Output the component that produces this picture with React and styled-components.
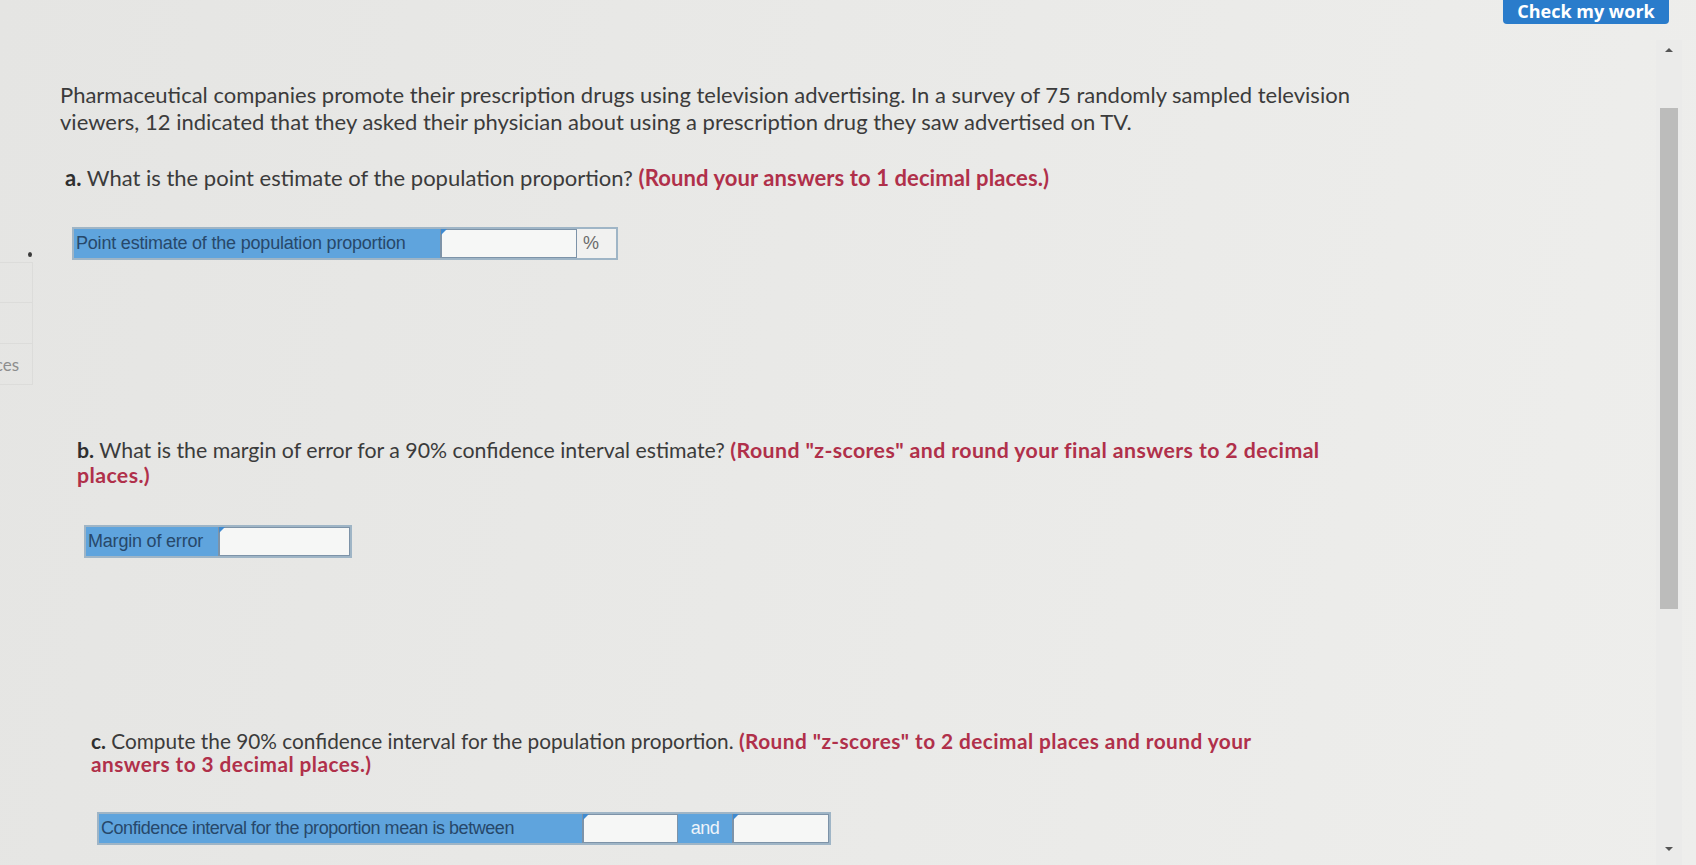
import React from 'react';
import styled, { createGlobalStyle } from 'styled-components';

const GlobalStyle = createGlobalStyle`
  html, body {
    margin: 0;
    padding: 0;
    overflow: hidden;
  }
  body {
    font-family: Lato, "Liberation Sans", sans-serif;
    background: #e8e8e6;
  }
`;

const Page = styled.div`
  display: flex;
  width: 1696px;
  height: 865px;
  overflow: hidden;
  background: linear-gradient(100deg, #e5e5e3 0%, #e9e9e7 45%, #eeeeec 100%);
`;

const Sidebar = styled.div`
  position: relative;
  width: 33px;
  flex-shrink: 0;
  display: flex;
  flex-direction: column;
  padding-top: 262px;
`;

const SideDot = styled.span`
  position: absolute;
  left: 28px;
  top: 252px;
  width: 4px;
  height: 5px;
  border-radius: 50%;
  background: #3a3a3a;
`;

const SideTab = styled.div`
  height: 41px;
  box-sizing: border-box;
  border: 1px solid #dcdcda;
  border-left: none;
  border-top: ${(p) => (p.first ? '1px solid #dcdcda' : 'none')};
  display: flex;
  align-items: center;
  justify-content: flex-end;
  padding-right: 13px;
  overflow: hidden;
  font-family: Lato, "Liberation Sans", sans-serif;
  font-size: 17px;
  color: #8d8d8d;
`;

const Main = styled.div`
  flex: 1;
  padding-top: 81px;
  color: #3b3b3b;
`;

const Paragraph = styled.p`
  margin: 0 0 0 ${(p) => p.indent}px;
  font-size: 22px;
  line-height: 27px;
  white-space: nowrap;
`;

const Question = styled.p`
  margin: ${(p) => p.top}px 0 0 ${(p) => p.indent}px;
  font-size: ${(p) => p.size || 22}px;
  line-height: ${(p) => p.lh || 27}px;
  white-space: nowrap;

  b + b,
  b:last-child {
    letter-spacing: ${(p) => p.hs || 0}px;
  }
`;

const Letter = styled.b`
  font-weight: 700;
  color: #2f2f2f;
`;

const Hint = styled.b`
  font-weight: 700;
  color: #b0304a;
`;

const AnswerRow = styled.div`
  display: flex;
  width: fit-content;
  height: 33px;
  margin: ${(p) => p.top}px 0 0 ${(p) => p.indent}px;
  border: 2px solid #9fb5c6;
  box-sizing: border-box;
  background: #5fa4dd;
  font-family: "Liberation Sans", Arial, sans-serif;
  font-size: 18px;
  letter-spacing: ${(p) => p.ls ?? -0.2}px;
  color: #27486a;
`;

const LabelCell = styled.div`
  width: ${(p) => p.w}px;
  display: flex;
  align-items: center;
  padding-left: 2px;
  box-sizing: border-box;
  white-space: nowrap;
  overflow: hidden;
`;

const InputCell = styled.div`
  position: relative;
  width: ${(p) => p.w}px;
  background: #f6f7f6;
  border: 1px solid #7d93a8;
  border-left-width: 2px;
  box-sizing: border-box;

  &::before {
    content: '';
    position: absolute;
    left: -1px;
    top: -1px;
    border-top: 6px solid #3f8ad0;
    border-right: 6px solid transparent;
  }
`;

const UnitCell = styled.div`
  width: ${(p) => p.w}px;
  display: flex;
  align-items: center;
  justify-content: ${(p) => (p.center ? 'center' : 'flex-start')};
  padding-left: ${(p) => (p.center ? 0 : 6)}px;
  box-sizing: border-box;
  background: ${(p) => (p.light ? '#f1f1f0' : 'transparent')};
  color: ${(p) => (p.light ? '#6a6a6a' : '#eef4fa')};
`;

const RightRail = styled.div`
  width: 193px;
  flex-shrink: 0;
  display: flex;
  flex-direction: column;
  align-items: flex-end;
`;

const CheckButton = styled.button`
  width: 166px;
  height: 24px;
  margin-right: 27px;
  border: none;
  border-radius: 0 0 4px 4px;
  background: #2a7ccb;
  color: #fff;
  font-family: "Open Sans", "Liberation Sans", sans-serif;
  font-weight: 700;
  font-size: 18px;
  line-height: 20px;
  padding: 0 0 3px;
  display: flex;
  align-items: flex-end;
  justify-content: center;
  box-sizing: border-box;
`;

const ScrollTrack = styled.div`
  flex: 1;
  width: 26px;
  margin: 16px 14px 0 0;
  display: flex;
  flex-direction: column;
  align-items: center;
  background: #ebebea;
`;

const Arrow = styled.div`
  width: 0;
  height: 0;
  border-left: 4px solid transparent;
  border-right: 4px solid transparent;
  ${(p) =>
    p.down
      ? 'border-top: 4px solid #555; margin: auto 0 14px;'
      : 'border-bottom: 4px solid #555; margin-top: 8px;'}
`;

const Thumb = styled.div`
  width: 18px;
  height: 501px;
  margin-top: 56px;
  background: #bcbcbb;
`;

export default function App() {
  return (
    <>
      <GlobalStyle />
      <Page>
        <Sidebar>
          <SideDot />
          <SideTab first />
          <SideTab />
          <SideTab>ces</SideTab>
        </Sidebar>
        <Main>
          <Paragraph indent={27}>
            Pharmaceutical companies promote their prescription drugs using television advertising. In a survey of 75 randomly sampled television
            <br />
            viewers, 12 indicated that they asked their physician about using a prescription drug they saw advertised on TV.
          </Paragraph>

          <Question top={29} indent={32} hs={0.1}>
            <Letter>a.</Letter> What is the point estimate of the population proportion?{' '}
            <Hint>(Round your answers to 1 decimal places.)</Hint>
          </Question>
          <AnswerRow top={36} indent={39}>
            <LabelCell w={366}>Point estimate of the population proportion</LabelCell>
            <InputCell w={137} />
            <UnitCell w={39} light>%</UnitCell>
          </AnswerRow>

          <Question top={178} indent={44} lh={25} size={21.3} hs={0.4}>
            <Letter>b.</Letter> What is the margin of error for a 90% confidence interval estimate?{' '}
            <Hint>
              (Round "z-scores" and round your final answers to 2 decimal
              <br />
              places.)
            </Hint>
          </Question>
          <AnswerRow top={37} indent={51}>
            <LabelCell w={132}>Margin of error</LabelCell>
            <InputCell w={132} />
          </AnswerRow>

          <Question top={171} indent={58} lh={23} size={20.8} hs={0.45}>
            <Letter>c.</Letter> Compute the 90% confidence interval for the population proportion.{' '}
            <Hint>
              (Round "z-scores" to 2 decimal places and round your
              <br />
              answers to 3 decimal places.)
            </Hint>
          </Question>
          <AnswerRow top={37} indent={64} ls={-0.45}>
            <LabelCell w={483}>Confidence interval for the proportion mean is between</LabelCell>
            <InputCell w={96} />
            <UnitCell w={54} center>and</UnitCell>
            <InputCell w={97} />
          </AnswerRow>
        </Main>
        <RightRail>
          <CheckButton>Check my work</CheckButton>
          <ScrollTrack>
            <Arrow />
            <Thumb />
            <Arrow down />
          </ScrollTrack>
        </RightRail>
      </Page>
    </>
  );
}
